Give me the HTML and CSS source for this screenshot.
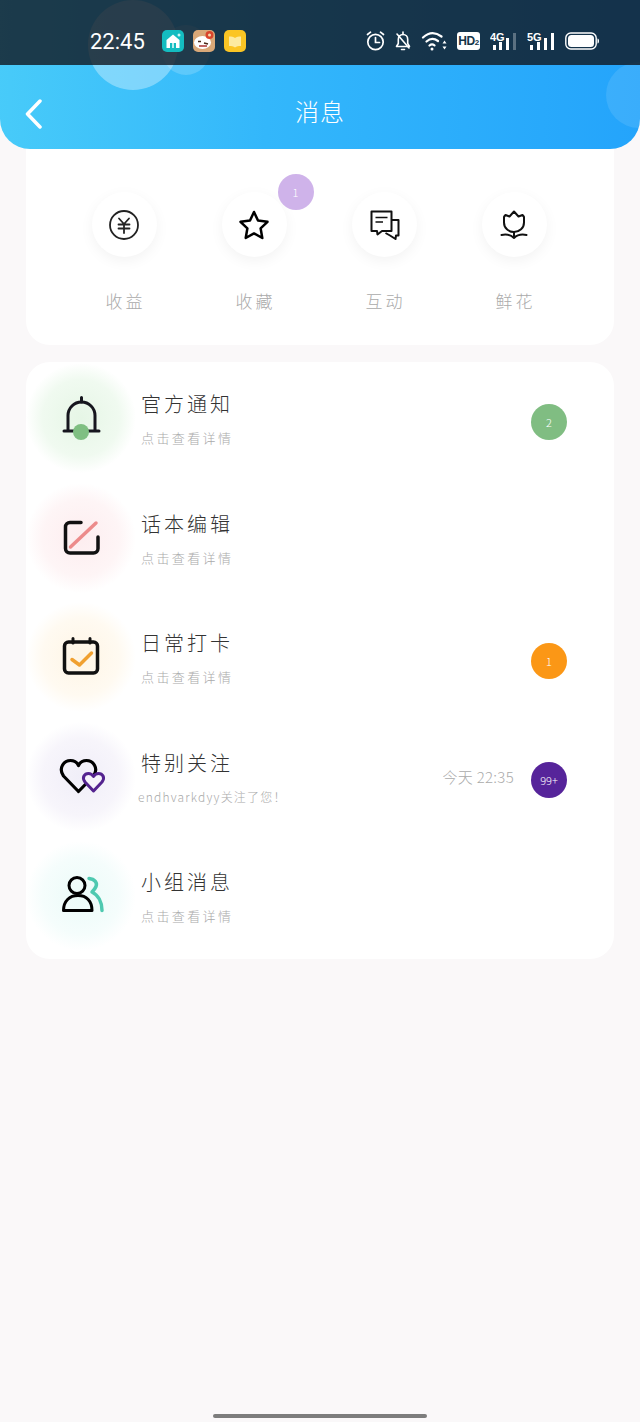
FILE: index.html
```html
<!DOCTYPE html>
<html lang="zh">
<head>
    <meta charset="UTF-8">
    <meta name="viewport" content="width=device-width, initial-scale=1.0">
    <title>消息</title>
    <link rel="stylesheet" href="styles.css">
</head>
<body>

    <header class="top">
        <div class="bubble bubble-big"></div>
        <div class="bubble bubble-small"></div>
        <div class="bubble bubble-right"></div>

        <!-- Status bar -->
        <div class="status">
            <span class="clock">22:45</span>
            <div class="apps">
                <svg width="22" height="22" viewBox="0 0 22 22">
                    <rect width="22" height="22" rx="5" fill="#14bcc0"/>
                    <path d="M4.500 18V10L11 4.500 17.500 10V18Z" fill="#fff"/>
                    <path d="M8 18V13h2.300v5ZM11.700 18V13H14v5Z" fill="#14bcc0"/>
                    <circle cx="17" cy="5" r="1.500" fill="#c9f3f1"/>
                </svg>
                <svg width="22" height="22" viewBox="0 0 22 22">
                    <rect width="22" height="22" rx="5" fill="#d9a878"/>
                    <ellipse cx="9.500" cy="12.500" rx="8.500" ry="6.500" fill="#fff"/>
                    <circle cx="16.500" cy="5" r="4" fill="#d9442c"/>
                    <circle cx="16.500" cy="5" r="1.500" fill="#f7d9a8"/>
                    <path d="M5 11.500h3M11 13l4 1" stroke="#4a2a1a" stroke-width="1.500"/>
                    <path d="M6 16h8" stroke="#a33" stroke-width="1.500"/>
                </svg>
                <svg width="22" height="22" viewBox="0 0 22 22">
                    <rect width="22" height="22" rx="5" fill="#fbc524"/>
                    <path d="M5 6.500c2.500 0 4.500.4 6 1.500 1.500-1.100 3.500-1.500 6-1.500V16c-2.500 0-4.500.4-6 1.500C9.500 16.400 7.500 16 5 16Z" fill="#fdeaa0"/>
                </svg>
            </div>
            <div class="sys">
                <svg width="19" height="20" viewBox="0 0 19 20" fill="none" stroke="#fff" stroke-width="1.700">
                    <circle cx="9.500" cy="11" r="7.700"/>
                    <path d="M9.500 6.500V11.500H13.500M1.500 3.500 4.500 1.200M17.500 3.500 14.500 1.200" stroke-linecap="round"/>
                </svg>
                <svg width="16" height="20" viewBox="0 0 16 20" fill="none" stroke="#fff" stroke-width="1.600">
                    <path d="M1.500 15.500H14.500L12.700 12.500V8.500C12.700 5.500 10.700 3.500 8 3.500 5.300 3.500 3.300 5.500 3.300 8.500V12.500Z" stroke-linejoin="round"/>
                    <path d="M8 1V3.500M6.500 18.500H9.500M2 3 14 17" stroke-linecap="round"/>
                </svg>
                <svg width="26" height="20" viewBox="0 0 26 20" fill="none" stroke="#fff" stroke-width="2.200" stroke-linecap="round">
                    <path d="M2 6.500C8 1 14.500 1 20.500 5.500M5.500 10.500C9 7.500 13.500 7.500 17 10M8.500 14.500C10 13.300 12 13.300 13.500 14.300"/>
                    <circle cx="11" cy="18" r="1.500" fill="#fff" stroke="none"/>
                    <path d="M23.500 9.500 21.500 12.500H25.500ZM23.500 18.500 21.500 15.500H25.500Z" fill="#fff" stroke="none"/>
                </svg>
                <span class="hd">HD<small>2</small></span>
                <svg width="27" height="20" viewBox="0 0 27 20">
                    <text class="net" x="0" y="9.500">4G</text>
                    <path d="M3 14h3v5H3ZM9 11h3v8H9ZM16 7h3v12h-3Z" fill="#fff"/>
                    <path d="M23 2h3v17h-3Z" fill="#fff" opacity=".3"/>
                </svg>
                <svg width="28" height="20" viewBox="0 0 28 20">
                    <text class="net" x="0" y="9.500">5G</text>
                    <path d="M3 14h3v5H3ZM10 11h3v8h-3ZM17 7h3v12h-3ZM24 2h3v17h-3Z" fill="#fff"/>
                </svg>
                <svg width="34" height="18" viewBox="0 0 34 18">
                    <rect x=".8" y="1" width="30.400" height="16" rx="5" fill="none" stroke="#fff" stroke-width="1.400"/>
                    <rect x="3" y="3" width="26" height="12" rx="3.500" fill="#fff"/>
                    <path d="M32.500 6.500c1 .3 1.500 1 1.500 2.500s-.5 2.200-1.500 2.500Z" fill="#fff"/>
                </svg>
            </div>
        </div>

        <!-- Title bar -->
        <div class="nav">
            <svg class="back" width="18" height="30" viewBox="0 0 18 30" fill="none" stroke="#fff" stroke-width="3.500" stroke-linecap="round" stroke-linejoin="round">
                <path d="M15 2 2.500 15 15 28"/>
            </svg>
            <h1>消息</h1>
        </div>
    </header>

    <main class="content">
        <!-- Shortcut tiles -->
        <section class="card tiles">
            <div class="tile">
                <div class="tile-icon">
                    <svg width="32" height="32" viewBox="0 0 32 32" fill="none" stroke="#222" stroke-width="1.800" stroke-linecap="round">
                        <circle cx="16" cy="16" r="14"/>
                        <path d="M11 9.500 16 15 21 9.500M10.500 15.500H21.500M10.500 19.500H21.500M16 15V24"/>
                    </svg>
                </div>
                <span class="tile-label">收益</span>
            </div>
            <div class="tile">
                <div class="tile-icon">
                    <svg width="32" height="32" viewBox="0 0 32 32" fill="none" stroke="#000" stroke-width="2.500" stroke-linejoin="round">
                        <path d="M16 3 20 11.500 29.500 12.800 22.600 19.300 24.300 29 16 24.400 7.700 29 9.400 19.300 2.500 12.800 12 11.500Z"/>
                    </svg>
                    <span class="tile-badge">1</span>
                </div>
                <span class="tile-label">收藏</span>
            </div>
            <div class="tile">
                <div class="tile-icon">
                    <svg width="32" height="32" viewBox="0 0 32 32" fill="none" stroke="#111" stroke-width="2" stroke-linejoin="round">
                        <path d="M3.500 2.500H23.500V22H14L9.500 25.500 9 22H3.500Z"/>
                        <path d="M23.500 11H30.500V26.500H28L27.500 30 22 26.500 17.500 24"/>
                        <path d="M7.500 8.500H19.500M7.500 13H15" stroke-width="1.700"/>
                    </svg>
                </div>
                <span class="tile-label">互动</span>
            </div>
            <div class="tile">
                <div class="tile-icon">
                    <svg width="32" height="32" viewBox="0 0 32 32" fill="none" stroke="#111" stroke-width="2" stroke-linecap="round" stroke-linejoin="round">
                        <path d="M6 8C6.500 7 7 6.500 7.500 6L11.500 7.500 16 2.500 20.500 7.500 24.500 6C25 6.500 25.500 7 26 8V13.500C26 19 21.500 23 16 23 10.500 23 6 19 6 13.500Z"/>
                        <path d="M16 23V29M3.500 26C8.500 25 13 26 16 29 19 26 23.500 25 28.500 26"/>
                    </svg>
                </div>
                <span class="tile-label">鲜花</span>
            </div>
        </section>

        <!-- Message list -->
        <section class="card list">
            <div class="row">
                <div class="glow glow-green">
                    <svg class="row-icon" width="44" height="44" viewBox="0 0 44 44" fill="none" stroke="#16161e" stroke-width="3">
                        <path d="M9 35V19.500A13.500 13.500 0 0 1 36 19.500V35"/>
                        <path d="M22.500 1.500V6M5 35H40" stroke-linecap="round"/>
                        <circle cx="22" cy="36" r="8" fill="#7fbf82" stroke="none"/>
                    </svg>
                </div>
                <div class="row-text">
                    <div class="row-title">官方通知</div>
                    <div class="row-sub">点击查看详情</div>
                </div>
                <span class="count count-green">2</span>
            </div>

            <div class="row">
                <div class="glow glow-pink">
                    <svg class="row-icon" width="44" height="44" viewBox="0 0 44 44" fill="none" stroke="#111" stroke-width="3.500" stroke-linecap="round">
                        <path d="M22 6.500H11A4.500 4.500 0 0 0 6.500 11V32.500A4.500 4.500 0 0 0 11 37H34.500A4.500 4.500 0 0 0 39 32.500V21"/>
                        <path d="M11.500 31 37 7" stroke="#ec8b8b"/>
                    </svg>
                </div>
                <div class="row-text">
                    <div class="row-title">话本编辑</div>
                    <div class="row-sub">点击查看详情</div>
                </div>
            </div>

            <div class="row">
                <div class="glow glow-orange">
                    <svg class="row-icon" width="44" height="44" viewBox="0 0 44 44" fill="none" stroke="#111" stroke-width="3.500" stroke-linecap="round" stroke-linejoin="round">
                        <rect x="5.500" y="7" width="33" height="31" rx="4"/>
                        <path d="M14 3.500V8M31 3.500V8" stroke-width="3"/>
                        <path d="M13 24.500 20.500 30 32.500 18" stroke="#f0a030"/>
                    </svg>
                </div>
                <div class="row-text">
                    <div class="row-title">日常打卡</div>
                    <div class="row-sub">点击查看详情</div>
                </div>
                <span class="count count-orange">1</span>
            </div>

            <div class="row">
                <div class="glow glow-purple">
                    <svg class="row-icon" width="44" height="44" viewBox="0 0 44 44" fill="none" stroke="#000" stroke-width="3.200" stroke-linejoin="round">
                        <path d="M19.500 36.500 4.500 21C-1 13 5 5.500 11.500 5.500 15 5.500 18 7.500 19.500 10.500 21 7.500 24 5.500 27.500 5.500 34 5.500 40 13 34.500 21Z"/>
                        <path d="M34.500 36 26 27C22.500 22.500 25.500 18.500 29.500 18.500 32 18.500 33.500 20 34.500 21.500 35.500 20 37 18.500 39.500 18.500 43.500 18.500 46.500 22.500 43 27Z" fill="#f6f4fb" stroke="#54238f" stroke-width="3"/>
                    </svg>
                </div>
                <div class="row-text">
                    <div class="row-title">特别关注</div>
                    <div class="row-sub row-sub-name">endhvarkdyy关注了您！</div>
                </div>
                <span class="row-time">今天 22:35</span>
                <span class="count count-purple">99+</span>
            </div>

            <div class="row">
                <div class="glow glow-teal">
                    <svg class="row-icon" width="44" height="44" viewBox="0 0 44 44" fill="none" stroke="#000" stroke-width="3" stroke-linejoin="round">
                        <circle cx="18" cy="11.500" r="8"/>
                        <path d="M4.500 36.500C4.500 27 10.500 21.500 19 21.500 27.500 21.500 33 27 33 36.500Z"/>
                        <path d="M30 4.500C36 5 38.500 9 37 12.500 36 15 34.500 16.500 33 18 39 21 43 28 43 36.500" stroke="#4fc9b0" stroke-width="3.500" stroke-linecap="round"/>
                    </svg>
                </div>
                <div class="row-text">
                    <div class="row-title">小组消息</div>
                    <div class="row-sub">点击查看详情</div>
                </div>
            </div>
        </section>
    </main>

    <div class="home-bar"></div>

</body>
</html>
```

FILE: styles.css
```css
* {
    box-sizing: border-box;
}

html, body {
    height: 100%;
}

body {
    margin: 0;
    height: 1422px;
    display: flex;
    flex-direction: column;
    overflow: hidden;
    background-color: #faf8f9;
    font-family: "Noto Sans CJK SC", "Noto Sans", sans-serif;
    font-weight: 300;
    color: #333;
}

/* Header */
.top {
    position: relative;
    z-index: 2;
    flex: none;
    height: 149px;
    overflow: hidden;
    border-radius: 0 0 30px 30px;
    background: linear-gradient(92deg, #48cbf9 0%, #33b7fb 42%, #24a4fb 100%);
}

.bubble {
    position: absolute;
    border-radius: 50%;
}

.bubble-big {
    left: 88px;
    top: 0;
    width: 90px;
    height: 90px;
    background-color: rgba(255, 255, 255, 0.34);
}

.bubble-small {
    left: 162px;
    top: 25px;
    width: 48px;
    height: 50px;
    background-color: rgba(255, 255, 255, 0.18);
}

.bubble-right {
    left: 606px;
    top: 62px;
    width: 66px;
    height: 66px;
    background-color: rgba(255, 255, 255, 0.1);
}

.status {
    position: relative;
    height: 65px;
    padding: 17px 41px 0 90px;
    display: flex;
    align-items: center;
    background-color: rgba(15, 18, 25, 0.78);
    color: #fff;
}

.clock {
    font-family: Roboto, sans-serif;
    font-size: 22px;
    font-weight: 400;
    width: 72px;
}

.apps {
    display: flex;
    gap: 9px;
}

.apps svg {
    display: block;
}

.sys {
    margin-left: auto;
    display: flex;
    align-items: center;
    gap: 10px;
}

.sys svg {
    display: block;
}

.hd {
    width: 23px;
    height: 18px;
    border-radius: 3px;
    background-color: #fff;
    color: #143549;
    font-family: "Liberation Sans", sans-serif;
    font-size: 12px;
    font-weight: 700;
    line-height: 18px;
    text-align: center;
    letter-spacing: -0.5px;
}

.hd small {
    font-size: 8px;
}

.net {
    font-family: "Liberation Sans", sans-serif;
    font-size: 11px;
    font-weight: 700;
    fill: #fff;
}

.nav {
    position: relative;
    height: 84px;
    padding: 14px 0 0 25px;
    display: flex;
    align-items: center;
}

.back {
    display: block;
}

.nav h1 {
    position: absolute;
    left: 295px;
    top: 28px;
    margin: 0;
    font-size: 24px;
    font-weight: 300;
    line-height: 36px;
    letter-spacing: 1px;
    color: #fff;
}

/* Cards */
.content {
    flex: 1;
    padding: 0 26px;
}

.card {
    background-color: #fff;
    border-radius: 24px;
}

.tiles {
    margin-top: -30px;
    height: 226px;
    padding: 73px 35px 0 33px;
    display: grid;
    grid-template-columns: repeat(4, 130px);
}

.tile {
    display: flex;
    flex-direction: column;
    align-items: center;
}

.tile-icon {
    position: relative;
    width: 65px;
    height: 65px;
    border-radius: 50%;
    background-color: #fff;
    box-shadow: 0 4px 14px rgba(0, 0, 0, 0.05);
    display: flex;
    justify-content: center;
    align-items: center;
}

.tile-badge {
    position: absolute;
    left: 56px;
    top: -18px;
    width: 36px;
    height: 36px;
    border-radius: 50%;
    background-color: #cfb3ea;
    color: #fff;
    font-size: 11px;
    line-height: 36px;
    text-align: center;
}

.tile-label {
    margin: 31px 0 0 3px;
    font-size: 17px;
    line-height: 26px;
    letter-spacing: 3px;
    color: #aaa;
}

.list {
    margin-top: 17px;
    height: 597px;
}

.row {
    height: 119.5px;
    display: flex;
    align-items: center;
    padding-right: 47px;
}

.glow {
    align-self: flex-start;
    flex: none;
    width: 110px;
    height: 110px;
    margin-top: 1px;
    border-radius: 50%;
    display: flex;
    justify-content: center;
    align-items: center;
}

.glow-green {
    background: radial-gradient(circle closest-side, #e6f6e6 0%, #f0faf0 70%, #fff 100%);
}

.glow-pink {
    background: radial-gradient(circle closest-side, #fdedef 0%, #fef5f6 70%, #fff 100%);
}

.glow-orange {
    background: radial-gradient(circle closest-side, #fef5e5 0%, #fffaf1 70%, #fff 100%);
}

.glow-purple {
    background: radial-gradient(circle closest-side, #f0eef8 0%, #f7f5fb 70%, #fff 100%);
}

.glow-teal {
    background: radial-gradient(circle closest-side, #ebfbf8 0%, #f5fdfc 70%, #fff 100%);
}

.row-icon {
    display: block;
    overflow: visible;
}

.row-text {
    margin: 0 0 6px 5px;
    flex: 1;
}

.row-title {
    font-size: 20px;
    line-height: 30px;
    letter-spacing: 3px;
    color: #333;
}

.row-sub {
    margin-top: 9px;
    font-size: 13px;
    line-height: 20px;
    letter-spacing: 2.4px;
    color: #aaa;
}

.row-sub-name {
    margin-left: -3px;
    font-size: 12px;
    letter-spacing: 1.2px;
}

.row-time {
    margin: 0 17px 8px 0;
    font-size: 15px;
    letter-spacing: 0.3px;
    color: #aaa;
}

.count {
    flex: none;
    width: 36px;
    height: 36px;
    border-radius: 50%;
    color: #fff;
    font-size: 11px;
    line-height: 36px;
    text-align: center;
}

.count-green {
    background-color: #80bd82;
}

.count-orange {
    background-color: #fb9716;
}

.count-purple {
    background-color: #56249a;
}

.home-bar {
    flex: none;
    width: 214px;
    height: 4px;
    margin: 0 auto 4px;
    border-radius: 2px;
    background-color: #7d7d7d;
}
```
